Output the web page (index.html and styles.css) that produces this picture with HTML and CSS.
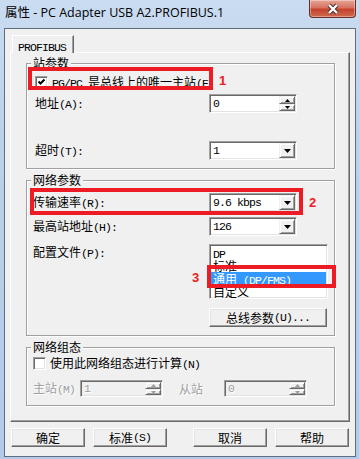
FILE: index.html
```html
<!DOCTYPE html>
<html lang="zh-CN">

<head>
    <meta charset="UTF-8">
    <meta name="viewport" content="width=device-width, initial-scale=1.0">
    <title>属性 - PC Adapter USB A2.PROFIBUS.1</title>
    <link rel="stylesheet" href="styles.css">
</head>

<body>
    <div class="window">
        <div class="titlebar">
            <span class="title">属性 - PC Adapter USB A2.PROFIBUS.1</span>
            <div class="close">
                <svg width="14" height="12" viewBox="0 0 14 12">
                    <path d="M3 2L11 10M11 2L3 10" stroke="#4a2b28" stroke-width="4.2" />
                    <path d="M3 2L11 10M11 2L3 10" stroke="#fff" stroke-width="2.4" />
                </svg>
            </div>
        </div>

        <div class="client">
            <div class="tabs">
                <div class="tab"><span class="l">PROFIBUS</span></div>
            </div>

            <div class="page">
                <!-- 站参数 -->
                <fieldset class="group station">
                    <legend>站参数</legend>
                    <div class="check-row">
                        <span class="checkbox">
                            <svg width="9" height="9" viewBox="0 0 9 9">
                                <path d="M1.5 3.5L3.5 5.5L7.5 1.5" stroke="#000" stroke-width="2" fill="none" />
                            </svg>
                        </span>
                        <span class="check-text"><span class="l">PG/PC </span>是总线上的唯一主站<span class="l">(E)</span></span>
                    </div>
                    <div class="field first">
                        <span class="label">地址<span class="l">(A):</span></span>
                        <div class="box">
                            <span class="value"><span class="l">0</span></span>
                            <span class="arrows">
                                <span class="arrow"><svg width="5" height="3"><path d="M0 3h5L2.5 0z" /></svg></span>
                                <span class="arrow"><svg width="5" height="3"><path d="M0 0h5L2.5 3z" /></svg></span>
                            </span>
                        </div>
                    </div>
                    <div class="field timeout">
                        <span class="label">超时<span class="l">(T):</span></span>
                        <div class="box">
                            <span class="value"><span class="l">1</span></span>
                            <span class="drop"><svg width="7" height="4"><path d="M0 0h7L3.5 4z" /></svg></span>
                        </div>
                    </div>
                </fieldset>

                <!-- 网络参数 -->
                <fieldset class="group network">
                    <legend>网络参数</legend>
                    <div class="field first">
                        <span class="label">传输速率<span class="l">(R):</span></span>
                        <div class="box">
                            <span class="value"><span class="l">9.6 kbps</span></span>
                            <span class="drop"><svg width="7" height="4"><path d="M0 0h7L3.5 4z" /></svg></span>
                        </div>
                    </div>
                    <div class="field">
                        <span class="label">最高站地址<span class="l">(H):</span></span>
                        <div class="box">
                            <span class="value"><span class="l">126</span></span>
                            <span class="drop"><svg width="7" height="4"><path d="M0 0h7L3.5 4z" /></svg></span>
                        </div>
                    </div>
                    <div class="field profile">
                        <span class="label">配置文件<span class="l">(P):</span></span>
                        <div class="listbox">
                            <div class="item"><span class="l">DP</span></div>
                            <div class="item">标准</div>
                            <div class="item selected">通用<span class="l"> (DP/FMS)</span></div>
                            <div class="item">自定义</div>
                        </div>
                    </div>
                    <div class="bus-row">
                        <div class="btn bus">总线参数<span class="l">(U)...</span></div>
                    </div>
                </fieldset>

                <!-- 网络组态 -->
                <fieldset class="group config">
                    <legend>网络组态</legend>
                    <div class="check-row">
                        <span class="checkbox"></span>
                        <span>使用此网络组态进行计算<span class="l">(N)</span></span>
                    </div>
                    <div class="field disabled">
                        <span class="label short">主站<span class="l">(M)</span></span>
                        <div class="box small">
                            <span class="value"><span class="l">1</span></span>
                            <span class="arrows">
                                <span class="arrow"><svg width="5" height="3"><path d="M0 3h5L2.5 0z" /></svg></span>
                                <span class="arrow"><svg width="5" height="3"><path d="M0 0h5L2.5 3z" /></svg></span>
                            </span>
                        </div>
                        <span class="label slave">从站</span>
                        <div class="box small">
                            <span class="value"><span class="l">0</span></span>
                            <span class="arrows">
                                <span class="arrow"><svg width="5" height="3"><path d="M0 3h5L2.5 0z" /></svg></span>
                                <span class="arrow"><svg width="5" height="3"><path d="M0 0h5L2.5 3z" /></svg></span>
                            </span>
                        </div>
                    </div>
                </fieldset>
            </div>

            <div class="buttons">
                <div class="btn">确定</div>
                <div class="btn">标准<span class="l">(S)</span></div>
                <div class="btn cancel">取消</div>
                <div class="btn">帮助</div>
            </div>
        </div>

        <!-- 标注 -->
        <div class="mark m1"></div>
        <div class="mark m2"></div>
        <div class="mark m3"></div>
        <span class="num n1">1</span>
        <span class="num n2">2</span>
        <span class="num n3">3</span>
    </div>
</body>

</html>
```

FILE: styles.css
```css
* {
    box-sizing: border-box;
}

body {
    margin: 0;
    font-family: "Noto Sans CJK SC", "Liberation Sans", sans-serif;
    font-size: 12px;
    line-height: 12px;
    color: #000;
}

.l {
    font-family: "Liberation Mono", monospace;
    font-size: 11.5px;
    letter-spacing: -0.9px;
}

.window {
    position: relative;
    width: 359px;
    height: 459px;
    background: linear-gradient(to bottom, #cadcf1, #bad1ea 140px, #b3cbe8);
    overflow: hidden;
}

.titlebar {
    display: flex;
    height: 28px;
    padding-left: 5px;
}

.title {
    margin-top: 5px;
    font-family: "Open Sans", "Noto Sans CJK SC", sans-serif;
    font-size: 12.5px;
    line-height: 16px;
}

.close {
    margin-left: auto;
    margin-right: 3px;
    width: 47px;
    height: 18px;
    border: 1px solid #6b2f27;
    border-top: 0;
    border-radius: 0 0 4px 4px;
    background: linear-gradient(to bottom, #e6a697, #d7725f 45%, #c4432d 55%, #cf6a50);
    box-shadow: inset 0 0 0 1px rgba(255, 255, 255, 0.35);
    display: flex;
    align-items: center;
    justify-content: center;
}

.client {
    margin-left: 4px;
    width: 352px;
    height: 429px;
    border: 1px solid #5f6d7c;
    background: #f0f0f0;
    padding-left: 5px;
}

.tabs {
    display: flex;
    margin-top: 6px;
    padding-left: 2px;
    margin-bottom: -1px;
    position: relative;
    z-index: 1;
}

.tab {
    width: 62px;
    height: 18px;
    padding: 4px 0 0 5px;
    background: #f0f0f0;
    border-top: 1px solid #fff;
    border-left: 1px solid #fff;
    border-right: 1px solid #696969;
    box-shadow: inset -1px 0 0 #a0a0a0;
}

.page {
    width: 340px;
    height: 370px;
    border: 1px solid;
    border-color: #fff #696969 #696969 #fff;
    box-shadow: inset -1px -1px 0 #a0a0a0;
    background: #f0f0f0;
}

/* group boxes */
.group {
    width: 309px;
    min-width: 0;
    margin: 5px 0 0 15px;
    padding: 0 6px 8px;
    border: 1px solid #a0a0a0;
    box-shadow: 1px 1px 0 #fff, inset 1px 1px 0 #fff;
}

.group legend {
    margin-left: -2px;
    padding: 0 2px;
    height: 12px;
    line-height: 12px;
    background: #f0f0f0;
}

.station {
    margin-top: 4px;
}

.check-row {
    display: flex;
    align-items: center;
    gap: 4px;
    height: 13px;
    margin-top: 4px;
    white-space: nowrap;
}

.station .check-row {
    margin-top: 7px;
    margin-left: 2px;
}

.check-text {
    width: 157px;
    overflow: hidden;
}

.checkbox {
    width: 13px;
    height: 13px;
    flex: none;
    border: 1px solid;
    border-color: #a0a0a0 #fff #fff #a0a0a0;
    box-shadow: inset 1px 1px 0 #696969, inset -1px -1px 0 #e3e3e3;
    background: #fff;
    padding: 1px;
    display: flex;
}

.field {
    display: flex;
    align-items: center;
    height: 19px;
    margin-top: 5px;
    white-space: nowrap;
}

.field.first {
    margin-top: 7px;
}

.station .field {
    margin-left: 2px;
}

.station .label {
    width: 174px;
}

.station .first {
    margin-top: 5px;
}

.station .timeout {
    margin-top: 28px;
}

.label {
    width: 176px;
    flex: none;
}

/* edit / combo boxes */
.box {
    display: flex;
    width: 88px;
    height: 19px;
    border: 1px solid;
    border-color: #a0a0a0 #fff #fff #a0a0a0;
    box-shadow: inset 1px 1px 0 #696969, inset -1px -1px 0 #e3e3e3;
    background: #fff;
    padding: 1px;
}

.value {
    flex: 1;
    display: flex;
    align-items: center;
    padding-left: 2px;
}

.drop,
.arrow {
    width: 16px;
    display: flex;
    align-items: center;
    justify-content: center;
    background: #f0f0f0;
    border: 1px solid;
    border-color: #f0f0f0 #696969 #696969 #f0f0f0;
    box-shadow: inset 1px 1px 0 #fff, inset -1px -1px 0 #a0a0a0;
}

.drop {
    height: 15px;
}

.arrows {
    display: flex;
    flex-direction: column;
}

.arrow {
    height: 8px;
}

.arrow + .arrow {
    height: 7px;
}

svg path {
    fill: #000;
}

.checkbox svg path,
.close svg path {
    fill: none;
}

/* list box */
.profile {
    align-items: flex-start;
    height: 55px;
    margin-top: 8px;
}

.profile .label {
    margin-top: 2px;
}

.listbox {
    width: 119px;
    height: 55px;
    border: 1px solid;
    border-color: #a0a0a0 #fff #fff #a0a0a0;
    box-shadow: inset 1px 1px 0 #696969, inset -1px -1px 0 #e3e3e3;
    background: #fff;
    padding: 1px;
    overflow: hidden;
}

.item {
    height: 13px;
    line-height: 13px;
    padding-left: 2px;
}

.item.selected {
    background: #3399ff;
    color: #fff;
}

.bus-row {
    display: flex;
    padding-left: 176px;
    margin-top: 9px;
}

/* buttons */
.btn {
    display: flex;
    align-items: center;
    justify-content: center;
    width: 74px;
    height: 19px;
    background: #f0f0f0;
    border: 1px solid;
    border-color: #fff #696969 #696969 #fff;
    box-shadow: inset -1px -1px 0 #a0a0a0, inset 1px 1px 0 #e3e3e3;
    white-space: nowrap;
}

.btn.bus {
    width: 118px;
}

.buttons {
    display: flex;
    gap: 8px;
    margin-top: 6px;
    padding-left: 1px;
}

.buttons .cancel {
    margin-left: 18px;
}

/* disabled row */
.disabled {
    margin-top: 10px;
    height: 17px;
    color: #a0a0a0;
    text-shadow: 1px 1px 0 #fff;
}

.disabled .label.short {
    width: 47px;
}

.disabled .label.slave {
    width: 45px;
    margin-left: 16px;
}

.box.small {
    width: 83px;
    height: 17px;
    background: #f0f0f0;
}

.small .arrow {
    height: 7px;
}

.small .arrow + .arrow {
    height: 6px;
}

.small svg path {
    fill: #a0a0a0;
}

/* annotations */
.mark {
    position: absolute;
    border: 4px solid #ed1c24;
}

.m1 {
    left: 28px;
    top: 67px;
    width: 185px;
    height: 23px;
}

.m2 {
    left: 30px;
    top: 188px;
    width: 273px;
    height: 27px;
}

.m3 {
    left: 207px;
    top: 265px;
    width: 129px;
    height: 23px;
}

.num {
    position: absolute;
    color: #ed1c24;
    font: bold 13px/13px "Liberation Sans", sans-serif;
}

.n1 {
    left: 219px;
    top: 74px;
}

.n2 {
    left: 309px;
    top: 196px;
}

.n3 {
    left: 192px;
    top: 271px;
}
```
